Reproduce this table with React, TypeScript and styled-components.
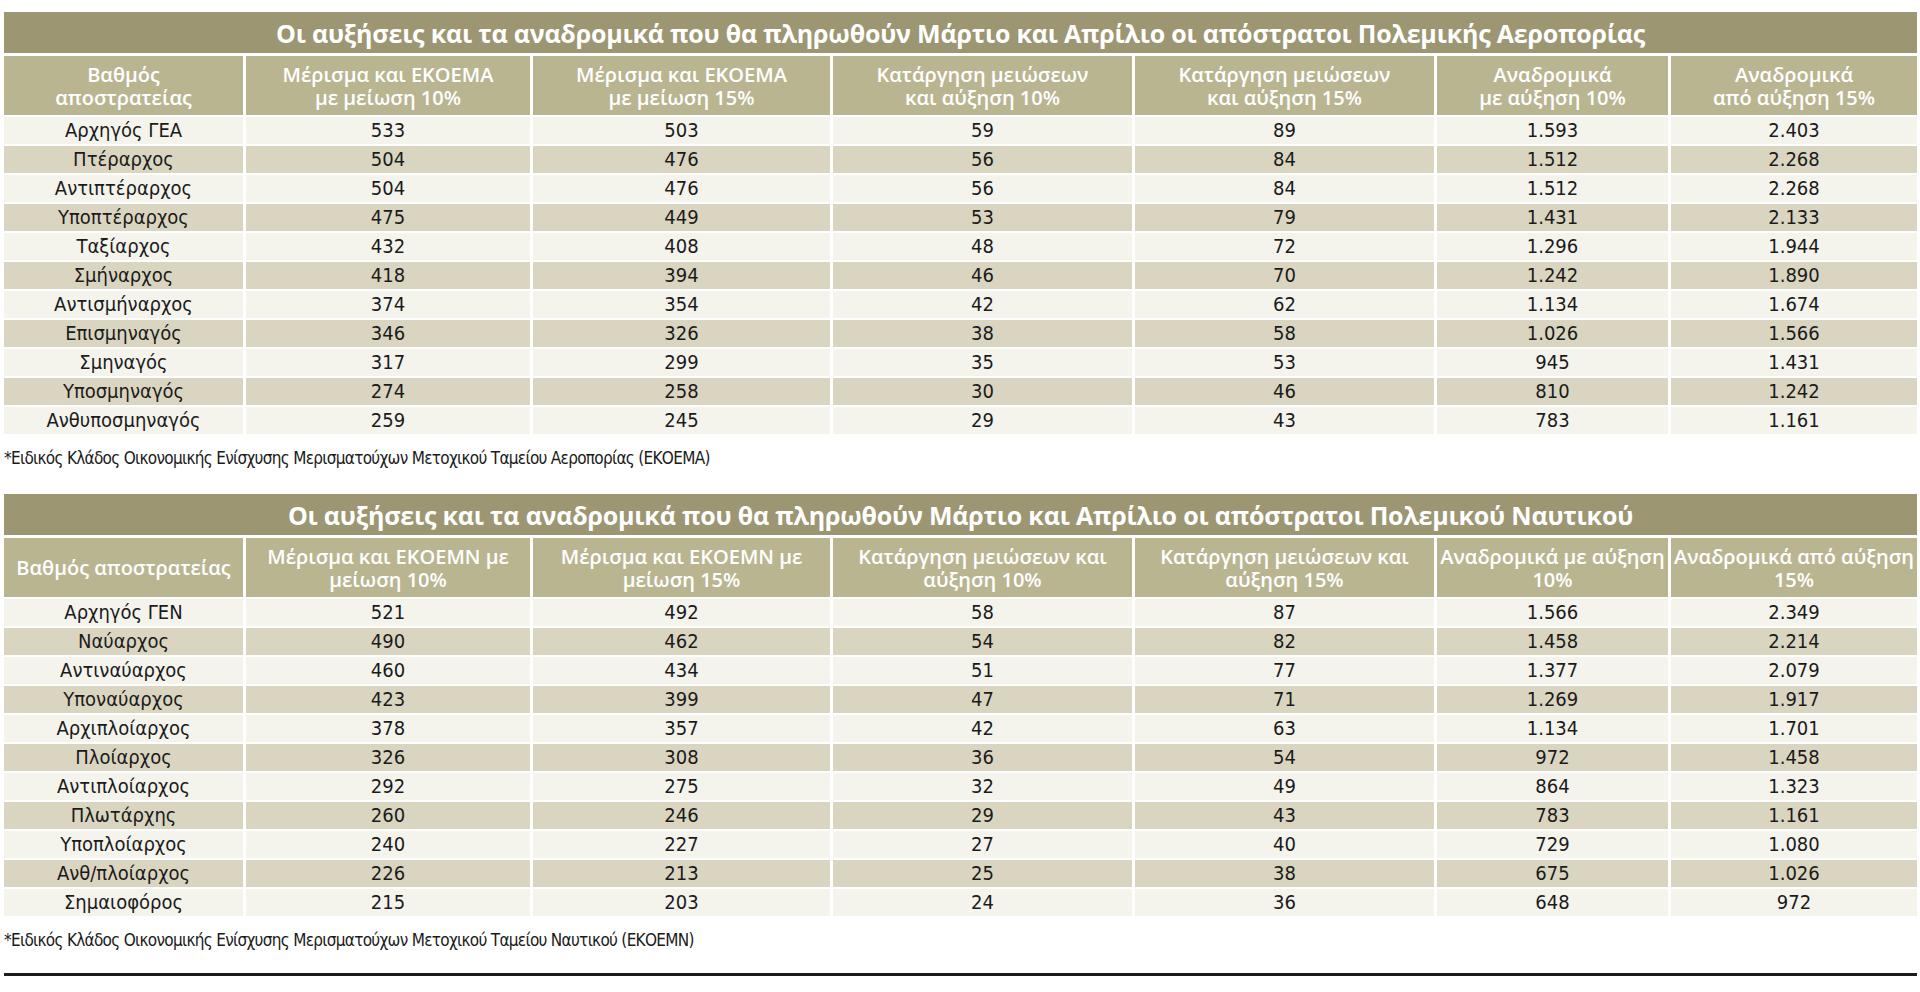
import styled, { createGlobalStyle } from 'styled-components'

const GlobalStyle = createGlobalStyle`
  html, body {
    margin: 0;
    padding: 0;
    background: #ffffff;
  }
  body {
    font-family: "DejaVu Sans Condensed", "DejaVu Sans", "Liberation Sans", sans-serif;
    color: #1b1b1b;
  }
`

const COLUMNS = '239px 284px 297px 299px 299px 231px 246px'

type Row = [string, string, string, string, string, string, string]

const airForceHead: string[][] = [
  ['Βαθμός', 'αποστρατείας'],
  ['Μέρισμα και ΕΚΟΕΜΑ', 'με μείωση 10%'],
  ['Μέρισμα και ΕΚΟΕΜΑ', 'με μείωση 15%'],
  ['Κατάργηση μειώσεων', 'και αύξηση 10%'],
  ['Κατάργηση μειώσεων', 'και αύξηση 15%'],
  ['Αναδρομικά', 'με αύξηση 10%'],
  ['Αναδρομικά', 'από αύξηση 15%'],
]

const airForceRows: Row[] = [
  ['Αρχηγός ΓΕΑ', '533', '503', '59', '89', '1.593', '2.403'],
  ['Πτέραρχος', '504', '476', '56', '84', '1.512', '2.268'],
  ['Αντιπτέραρχος', '504', '476', '56', '84', '1.512', '2.268'],
  ['Υποπτέραρχος', '475', '449', '53', '79', '1.431', '2.133'],
  ['Ταξίαρχος', '432', '408', '48', '72', '1.296', '1.944'],
  ['Σμήναρχος', '418', '394', '46', '70', '1.242', '1.890'],
  ['Αντισμήναρχος', '374', '354', '42', '62', '1.134', '1.674'],
  ['Επισμηναγός', '346', '326', '38', '58', '1.026', '1.566'],
  ['Σμηναγός', '317', '299', '35', '53', '945', '1.431'],
  ['Υποσμηναγός', '274', '258', '30', '46', '810', '1.242'],
  ['Ανθυποσμηναγός', '259', '245', '29', '43', '783', '1.161'],
]

const navyHead: string[][] = [
  ['Βαθμός αποστρατείας'],
  ['Μέρισμα και ΕΚΟΕΜΝ με', 'μείωση 10%'],
  ['Μέρισμα και ΕΚΟΕΜΝ με', 'μείωση 15%'],
  ['Κατάργηση μειώσεων και', 'αύξηση 10%'],
  ['Κατάργηση μειώσεων και', 'αύξηση 15%'],
  ['Αναδρομικά με αύξηση', '10%'],
  ['Αναδρομικά από αύξηση', '15%'],
]

const navyRows: Row[] = [
  ['Αρχηγός ΓΕΝ', '521', '492', '58', '87', '1.566', '2.349'],
  ['Ναύαρχος', '490', '462', '54', '82', '1.458', '2.214'],
  ['Αντιναύαρχος', '460', '434', '51', '77', '1.377', '2.079'],
  ['Υποναύαρχος', '423', '399', '47', '71', '1.269', '1.917'],
  ['Αρχιπλοίαρχος', '378', '357', '42', '63', '1.134', '1.701'],
  ['Πλοίαρχος', '326', '308', '36', '54', '972', '1.458'],
  ['Αντιπλοίαρχος', '292', '275', '32', '49', '864', '1.323'],
  ['Πλωτάρχης', '260', '246', '29', '43', '783', '1.161'],
  ['Υποπλοίαρχος', '240', '227', '27', '40', '729', '1.080'],
  ['Ανθ/πλοίαρχος', '226', '213', '25', '38', '675', '1.026'],
  ['Σημαιοφόρος', '215', '203', '24', '36', '648', '972'],
]

const Page = styled.div`
  display: flex;
  flex-direction: column;
  padding: 12px 3px 0 4px;
  width: 1913px;
`

const TitleBar = styled.h2`
  margin: 0 0 3px;
  height: 41px;
  display: flex;
  align-items: center;
  justify-content: center;
  background: #9d9672;
  color: #ffffff;
  font-family: "Open Sans", "Liberation Sans", sans-serif;
  font-weight: 700;
  font-size: 25px;
  letter-spacing: -0.2px;
`

const Grid = styled.div`
  display: grid;
  grid-template-columns: ${COLUMNS};
  grid-template-rows: 59px;
  grid-auto-rows: 27px;
  column-gap: 3px;
  row-gap: 2px;
`

const HeadCell = styled.div`
  display: flex;
  flex-direction: column;
  align-items: center;
  justify-content: center;
  background: #bab591;
  color: #ffffff;
  font-family: "Open Sans", "Liberation Sans", sans-serif;
  font-weight: 600;
  font-size: 20px;
  line-height: 23px;
  text-align: center;
`

const Cell = styled.div<{ $shade: boolean }>`
  display: flex;
  align-items: center;
  justify-content: center;
  background: ${({ $shade }) => ($shade ? '#dad5c0' : '#f4f3ec')};
  font-size: 20px;
  line-height: 27px;
`

const Note = styled.p<{ $gapAfter: number }>`
  margin: 13px 0 ${({ $gapAfter }) => $gapAfter}px;
  font-size: 17px;
  line-height: 22px;
  letter-spacing: -0.7px;
  color: #1b1b1b;
`

const Rule = styled.hr`
  margin: 0;
  border: none;
  height: 3px;
  background: #1c1c1c;
`

type TableProps = {
  title: string
  head: string[][]
  rows: Row[]
}

function Table({ title, head, rows }: TableProps) {
  return (
    <section>
      <TitleBar>{title}</TitleBar>
      <Grid>
        {head.map((lines, i) => (
          <HeadCell key={i}>
            {lines.map((line) => (
              <span key={line}>{line}</span>
            ))}
          </HeadCell>
        ))}
        {rows.map((row, r) =>
          row.map((value, c) => (
            <Cell key={`${r}-${c}`} $shade={r % 2 === 1}>
              {value}
            </Cell>
          ))
        )}
      </Grid>
    </section>
  )
}

export default function App() {
  return (
    <Page>
      <GlobalStyle />
      <Table
        title="Οι αυξήσεις και τα αναδρομικά που θα πληρωθούν Μάρτιο και Απρίλιο οι απόστρατοι Πολεμικής Αεροπορίας"
        head={airForceHead}
        rows={airForceRows}
      />
      <Note $gapAfter={25}>
        *Ειδικός Κλάδος Οικονομικής Ενίσχυσης Μερισματούχων Μετοχικού Ταμείου Αεροπορίας (ΕΚΟΕΜΑ)
      </Note>
      <Table
        title="Οι αυξήσεις και τα αναδρομικά που θα πληρωθούν Μάρτιο και Απρίλιο οι απόστρατοι Πολεμικού Ναυτικού"
        head={navyHead}
        rows={navyRows}
      />
      <Note $gapAfter={22}>
        *Ειδικός Κλάδος Οικονομικής Ενίσχυσης Μερισματούχων Μετοχικού Ταμείου Ναυτικού (ΕΚΟΕΜΝ)
      </Note>
      <Rule />
    </Page>
  )
}
